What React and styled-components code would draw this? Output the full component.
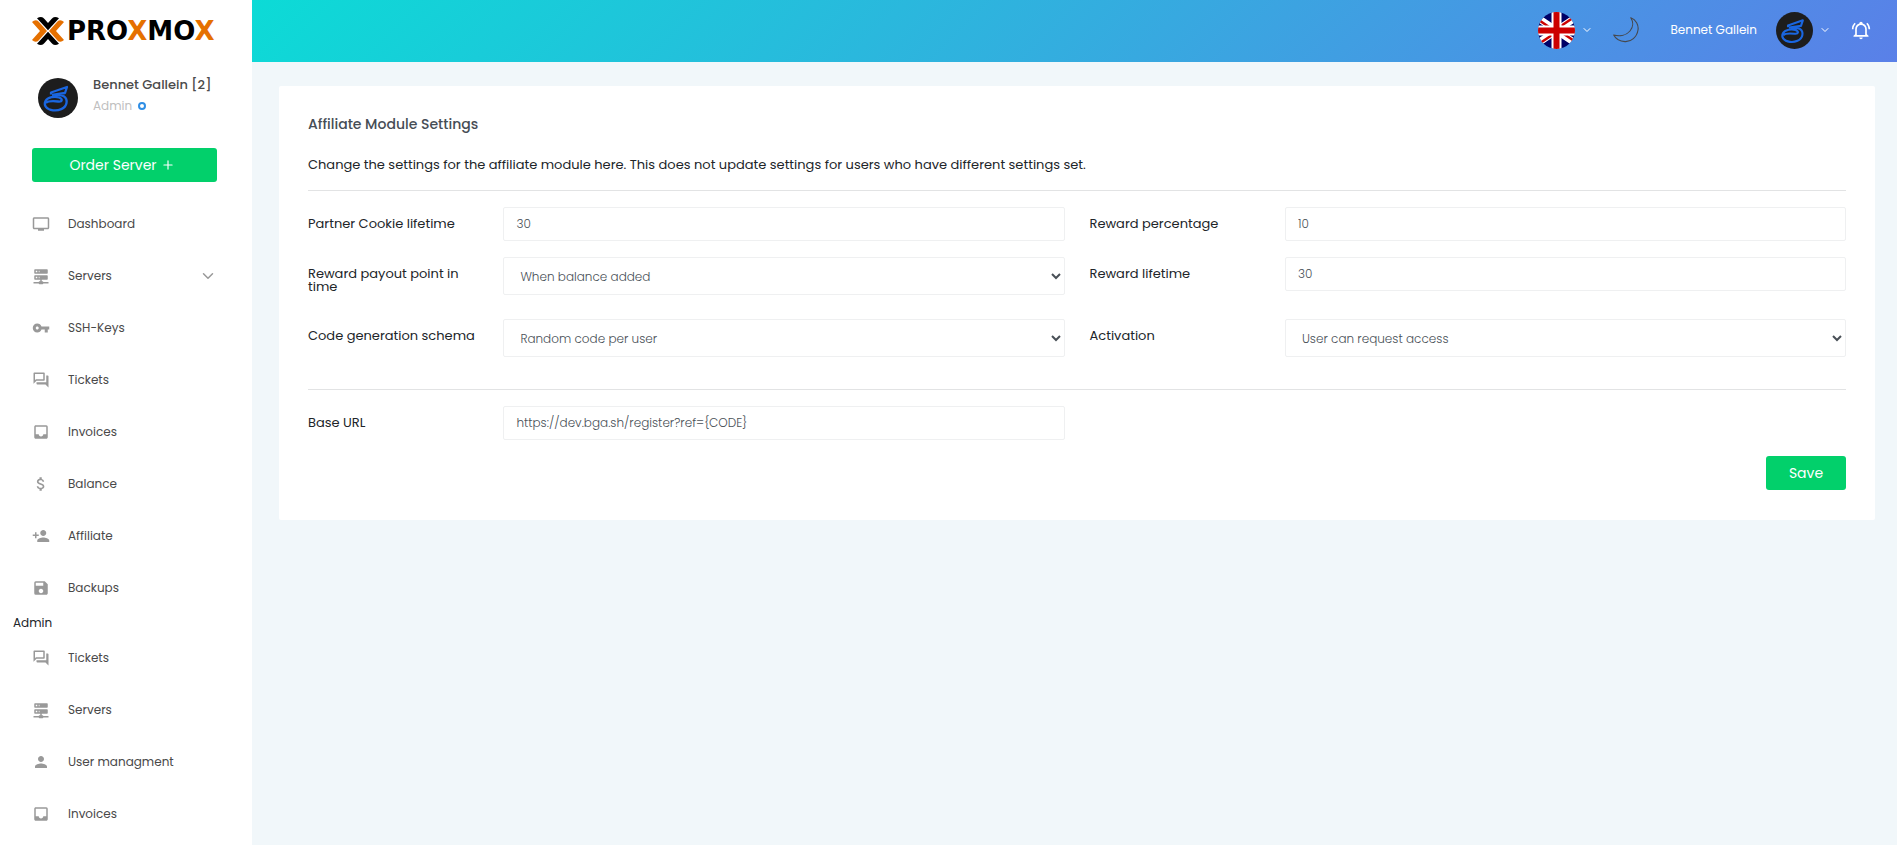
import React, { useState } from 'react';
import styled, { createGlobalStyle, css } from 'styled-components';
import {
  MdOutlineTv,
  MdVpnKey,
  MdOutlineForum,
  MdInbox,
  MdAttachMoney,
  MdPersonAdd,
  MdSave,
  MdPerson,
} from 'react-icons/md';
import { FiChevronDown, FiPlus } from 'react-icons/fi';

const GlobalStyle = createGlobalStyle`
  *, *::before, *::after {
    box-sizing: border-box;
  }
  body {
    margin: 0;
    background: #f1f7fa;
    color: #212529;
    font-family: 'Poppins', 'Inter', sans-serif;
    font-size: 13px;
  }
  button, input, select {
    font-family: inherit;
  }
`;

const Page = styled.div`
  display: grid;
  grid-template-columns: 252px 1fr;
  height: 100vh;
  overflow: hidden;
`;

const Sidebar = styled.aside`
  background: #fff;
  overflow: hidden;
  padding-top: 16px;
`;

const LogoLink = styled.a`
  display: flex;
  align-items: center;
  gap: 3px;
  height: 30px;
  margin-left: 32px;
  color: #000;
  font-family: 'DejaVu Sans', sans-serif;
  font-size: 26px;
  font-weight: 700;
  line-height: 30px;
  text-decoration: none;
  svg {
    flex: none;
  }
`;

const Accent = styled.span`
  color: #e57000;
`;

const Profile = styled.div`
  display: flex;
  gap: 15px;
  align-items: center;
  margin: 29px 0 27px;
  padding-left: 38px;
  height: 46px;
`;

const ProfileText = styled.div`
  padding-bottom: 4px;
`;

const ProfileName = styled.div`
  color: #4b4b4b;
  font-size: 13px;
  font-weight: 500;
  line-height: 20px;
`;

const ProfileRole = styled.div`
  display: flex;
  align-items: center;
  gap: 6px;
  color: #bfbfbf;
  font-size: 12px;
  line-height: 22px;
`;

const StatusDot = styled.span`
  width: 8px;
  height: 8px;
  border: 2px solid #2f8ee5;
  border-radius: 50%;
`;

const Button = styled.button`
  height: 34px;
  border: none;
  border-radius: 3px;
  background: #02d06b;
  color: #fff;
  font-size: 14px;
  cursor: pointer;
  ${({ $wide }) =>
    $wide
      ? css`
          display: flex;
          align-items: center;
          justify-content: center;
          gap: 4px;
          width: 185px;
          margin: 0 0 16px 32px;
          padding: 0 5px 0 0;
        `
      : css`
          width: 80px;
        `}
`;

const NavList = styled.ul`
  list-style: none;
  margin: 0;
  padding: 0;
`;

const NavLink = styled.a`
  display: flex;
  align-items: center;
  height: 52px;
  padding: 0 35px 0 32px;
  color: #494949;
  font-size: 12px;
  text-decoration: none;
  > svg {
    flex: none;
    color: #999;
  }
  > svg:first-child {
    margin-right: 18px;
  }
  > svg:last-child {
    margin-left: auto;
  }
`;

const NavHeading = styled.div`
  padding-left: 13px;
  font-size: 12px;
  line-height: 18px;
`;

const Main = styled.div`
  min-width: 0;
`;

const TopBar = styled.header`
  display: flex;
  align-items: center;
  justify-content: flex-end;
  gap: 20px;
  height: 62px;
  padding: 0 26px 2px 0;
  background: linear-gradient(135deg, #0cdbd6 0%, #5a80e8 100%);
  color: #fff;
`;

const BarButton = styled.button`
  display: flex;
  align-items: center;
  gap: 6px;
  padding: 0;
  border: none;
  background: none;
  color: inherit;
  font-size: 12px;
  cursor: pointer;
`;

const BarName = styled.span`
  margin: 0 13px 0 11px;
`;

const Card = styled.main`
  margin: 24px 22px 24px 27px;
  padding: 29px 29px 30px;
  border-radius: 2px;
  background: #fff;
`;

const Title = styled.h1`
  margin: 0 0 19px;
  color: #464d55;
  font-size: 14px;
  font-weight: 500;
  line-height: 19px;
`;

const Intro = styled.p`
  margin: 0 0 13px;
  font-size: 13px;
  line-height: 24px;
`;

const Divider = styled.hr`
  height: 1px;
  margin: 0 0 16px;
  border: none;
  background: #e2e3e4;
`;

const FieldGrid = styled.div`
  display: grid;
  grid-template-columns: repeat(8, 1fr);
  column-gap: 25px;
  row-gap: 16px;
  align-items: start;
  margin-bottom: ${({ $bottom }) => $bottom}px;
`;

const Label = styled.label`
  padding-top: 10px;
  line-height: 13px;
`;

const control = css`
  grid-column: span 3;
  width: 100%;
  border: 1px solid #eff0f1;
  border-radius: 2px;
  background: #fff;
  color: #495057;
  font-size: 12px;
  font-weight: 300;
  outline: none;
  &:focus {
    border-color: #2f8ee5;
  }
`;

const TextInput = styled.input`
  ${control}
  height: 34px;
  padding: 0 12px;
`;

const Select = styled.select`
  ${control}
  height: 38px;
  margin-bottom: 8px;
  padding: 0 0 0 12px;
`;

const Actions = styled.div`
  display: flex;
  justify-content: flex-end;
`;

function LogoMark() {
  return (
    <svg width="32" height="28" viewBox="0 0 32 28" aria-hidden="true">
      <g fill="#e57000">
        <path d="M0 5Q2 3 4 3.2Q6 3.4 7 5L15 14L7 23Q6 24.6 4 24.8Q2 25 0 23L8 14Z" />
        <path d="M32 5Q30 3 28 3.2Q26 3.4 25 5L17 14L25 23Q26 24.6 28 24.8Q30 25 32 23L24 14Z" />
      </g>
      <path d="M5 1.2Q7 0 9 0Q11 0 12.5 2L16 6L19.5 2Q21 0 23 0Q25 0 27 1.2L16 13.2Z" />
      <path d="M5 26.8Q7 28 9 28Q11 28 12.5 26L16 22L19.5 26Q21 28 23 28Q25 28 27 26.8L16 14.8Z" />
    </svg>
  );
}

function Avatar({ size }) {
  return (
    <svg width={size} height={size} viewBox="0 0 40 40" aria-hidden="true">
      <circle cx="20" cy="20" r="20" fill="#1d1d1d" />
      <path
        d="M13 16.5V14.5L29 9L27 15L14 16.8M17 17.5C25 16 29.5 19 28.5 25C27.5 31 20 33 15 32.3C8 31.5 5.5 27 7.5 23C9.5 19 17 18 21 19.5C25 21 24.5 24 20 23.5C15 23 10 23 8 25"
        fill="none"
        stroke="#1a66e0"
        strokeWidth="2.3"
        strokeLinejoin="round"
      />
    </svg>
  );
}

function Flag() {
  return (
    <svg width="37" height="37" viewBox="0 0 37 37" role="img" aria-label="English">
      <clipPath id="flag-round"><circle cx="18.5" cy="18.5" r="18.5" /></clipPath>
      <g clipPath="url(#flag-round)">
        <path d="M0 0h37v37H0z" fill="#006" />
        <path d="M-9 0L46 37M46 0L-9 37" stroke="#fff" strokeWidth="7" />
        <path d="M-9 1.5L18.5 20M46 -1.5L18.5 17M-9 38.5L18.5 20M46 35.5L18.5 17" stroke="#c00" strokeWidth="2.4" />
        <path d="M18.5 0v37M0 18.5h37" stroke="#fff" strokeWidth="10" />
        <path d="M18.5 0v37M0 18.5h37" stroke="#c00" strokeWidth="6" />
      </g>
    </svg>
  );
}

function MoonIcon() {
  return (
    <svg width="26" height="26" viewBox="0 0 26 26" aria-hidden="true">
      <path
        d="M17.8 .7C23 2.5 25.8 8 25 13C24 20 18 25 12 24.6C6.500 24.300 2.500 21.500 .7 18C7 19.600 13.500 18 17 14C20.300 10.300 20.500 5 17.800 .7Z"
        fill="none"
        stroke="#46484d"
        strokeWidth="1.1"
        strokeLinejoin="round"
      />
    </svg>
  );
}

function BellIcon() {
  return (
    <svg width="20" height="20" viewBox="0 0 24 24" fill="currentColor" aria-hidden="true">
      <path d="M10 21h4c0 1.100-.9 2-2 2s-2-.9-2-2m11-2v1H3v-1l2-2v-6c0-3.100 2.030-5.830 5-6.710V4a2 2 0 0 1 2-2a2 2 0 0 1 2 2v.29c2.970.88 5 3.610 5 6.710v6l2 2m-4-8a5 5 0 0 0-5-5a5 5 0 0 0-5 5v7h10v-7m2.750-7.810l-1.420 1.420A8.982 8.982 0 0 1 21 11h2c0-2.930-1.160-5.750-3.250-7.810M1 11h2c0-2.400.96-4.700 2.670-6.390L4.250 3.190A10.960 10.960 0 0 0 1 11z" />
    </svg>
  );
}

function ServerIcon() {
  return (
    <svg width="18" height="18" viewBox="0 0 24 24" fill="currentColor" aria-hidden="true">
      <path d="M13 19h1a1 1 0 0 1 1 1h7v2h-7a1 1 0 0 1-1 1h-4a1 1 0 0 1-1-1H2v-2h7a1 1 0 0 1 1-1h1v-2H4a1 1 0 0 1-1-1v-4a1 1 0 0 1 1-1h16a1 1 0 0 1 1 1v4a1 1 0 0 1-1 1h-7v2M4 3h16a1 1 0 0 1 1 1v4a1 1 0 0 1-1 1H4a1 1 0 0 1-1-1V4a1 1 0 0 1 1-1m5 4h1V5H9v2m0 8h1v-2H9v2M5 5v2h2V5H5m0 8v2h2v-2H5z" />
    </svg>
  );
}

const userLinks = [
  { label: 'Dashboard', icon: MdOutlineTv },
  { label: 'Servers', icon: ServerIcon, expandable: true },
  { label: 'SSH-Keys', icon: MdVpnKey },
  { label: 'Tickets', icon: MdOutlineForum },
  { label: 'Invoices', icon: MdInbox },
  { label: 'Balance', icon: MdAttachMoney },
  { label: 'Affiliate', icon: MdPersonAdd },
  { label: 'Backups', icon: MdSave },
];

const adminLinks = [
  { label: 'Tickets', icon: MdOutlineForum },
  { label: 'Servers', icon: ServerIcon },
  { label: 'User managment', icon: MdPerson },
  { label: 'Invoices', icon: MdInbox },
];

function Nav({ links }) {
  return (
    <NavList>
      {links.map(({ label, icon: Icon, expandable }) => (
        <li key={label}>
          <NavLink href="#">
            <Icon size={18} />
            <span>{label}</span>
            {expandable && <FiChevronDown size={18} />}
          </NavLink>
        </li>
      ))}
    </NavList>
  );
}

export default function App() {
  const [form, setForm] = useState({
    cookie: '30',
    percentage: '10',
    payout: 'When balance added',
    lifetime: '30',
    schema: 'Random code per user',
    activation: 'User can request access',
    baseUrl: 'https://dev.bga.sh/register?ref={CODE}',
  });
  const bind = name => ({
    id: name,
    value: form[name],
    onChange: e => setForm(f => ({ ...f, [name]: e.target.value })),
  });

  return (
    <Page>
      <GlobalStyle />
      <Sidebar>
        <LogoLink href="#">
          <LogoMark />
          <span>PRO<Accent>X</Accent>MO<Accent>X</Accent></span>
        </LogoLink>
        <Profile>
          <Avatar size={40} />
          <ProfileText>
            <ProfileName>Bennet Gallein [2]</ProfileName>
            <ProfileRole>Admin <StatusDot /></ProfileRole>
          </ProfileText>
        </Profile>
        <Button type="button" $wide>
          Order Server
          <FiPlus size={14} />
        </Button>
        <Nav links={userLinks} />
        <NavHeading>Admin</NavHeading>
        <Nav links={adminLinks} />
      </Sidebar>
      <Main>
        <TopBar>
          <BarButton type="button">
            <Flag />
            <FiChevronDown size={12} />
          </BarButton>
          <BarButton type="button" aria-label="Dark mode">
            <MoonIcon />
          </BarButton>
          <BarButton type="button">
            <BarName>Bennet Gallein</BarName>
            <Avatar size={37} />
            <FiChevronDown size={12} />
          </BarButton>
          <BarButton type="button" aria-label="Notifications">
            <BellIcon />
          </BarButton>
        </TopBar>
        <Card>
          <Title>Affiliate Module Settings</Title>
          <Intro>
            Change the settings for the affiliate module here. This does not update settings for users who have different settings set.
          </Intro>
          <Divider />
          <FieldGrid $bottom={24}>
            <Label htmlFor="cookie">Partner Cookie lifetime</Label>
            <TextInput {...bind('cookie')} />
            <Label htmlFor="percentage">Reward percentage</Label>
            <TextInput {...bind('percentage')} />
            <Label htmlFor="payout">Reward payout point in time</Label>
            <Select {...bind('payout')}>
              <option>When balance added</option>
            </Select>
            <Label htmlFor="lifetime">Reward lifetime</Label>
            <TextInput {...bind('lifetime')} />
            <Label htmlFor="schema">Code generation schema</Label>
            <Select {...bind('schema')}>
              <option>Random code per user</option>
            </Select>
            <Label htmlFor="activation">Activation</Label>
            <Select {...bind('activation')}>
              <option>User can request access</option>
            </Select>
          </FieldGrid>
          <Divider />
          <FieldGrid $bottom={16}>
            <Label htmlFor="baseUrl">Base URL</Label>
            <TextInput {...bind('baseUrl')} />
          </FieldGrid>
          <Actions>
            <Button type="button">Save</Button>
          </Actions>
        </Card>
      </Main>
    </Page>
  );
}
